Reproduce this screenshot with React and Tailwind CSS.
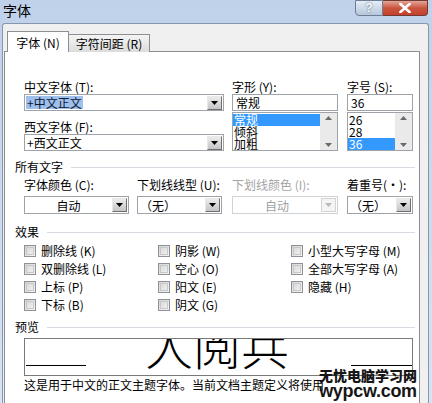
import React from "react";

const F = { fontFamily: '"Noto Sans CJK SC", "Noto Sans", sans-serif' };

function DropBtn({ disabled }) {
  return (
    <div
      className={
        "w-[15px] h-[14px] flex items-center justify-center border " +
        (disabled
          ? "border-[#d4d4d4] bg-[#f4f4f4]"
          : "border-t-[#e8e8e8] border-l-[#e8e8e8] border-r-[#6f6f6f] border-b-[#6f6f6f] bg-gradient-to-b from-[#ececec] to-[#c4c4c4]")
      }
    >
      <svg width="7" height="4" viewBox="0 0 7 4">
        <path d="M0 0h7L3.5 4z" fill={disabled ? "#b8b8b8" : "#000"} />
      </svg>
    </div>
  );
}

function Combo({ w, text, center, disabled, sel, h = "h-[18px]" }) {
  return (
    <div
      className={
        w +
        " " +
        h +
        " border flex items-center bg-white pr-[1px] " +
        (disabled ? "border-[#cfd2d6]" : "border-[#9ea3aa]")
      }
    >
      <div className={"flex-1 flex " + (center ? "justify-center" : "pl-[1px]")}>
        <span
          className={
            "text-[12px] leading-[13px] px-[1px] " +
            (sel ? "bg-[#9fc0ec] text-[#0d1a33]" : disabled ? "text-[#a0a0a0]" : "text-black")
          }
        >
          {text}
        </span>
      </div>
      <DropBtn disabled={disabled} />
    </div>
  );
}

function ScrollBar() {
  return (
    <div className="w-[17px] self-stretch bg-[#eaeaea] flex flex-col justify-between items-center py-[3px]">
      <svg width="7" height="4" viewBox="0 0 7 4">
        <path d="M3.5 0L7 4H0z" fill="#6a6a6a" />
      </svg>
      <svg width="7" height="4" viewBox="0 0 7 4">
        <path d="M0 0h7L3.5 4z" fill="#6a6a6a" />
      </svg>
    </div>
  );
}

function ListBox({ w, value, items, selIndex }) {
  return (
    <div className={w + " flex flex-col"}>
      <div className="h-[17px] border border-[#9ea3aa] bg-white flex items-center pl-[3px] text-[12px] leading-[13px]">
        {value}
      </div>
      <div className="h-[39px] mt-[1px] border border-[#9ea3aa] bg-white flex">
        <div className="flex-1 flex flex-col pt-[1px]">
          {items.map((it, i) => (
            <div
              key={it}
              className={
                "h-[12px] leading-[12px] text-[12px] pl-[1px] " +
                (i === selIndex ? "bg-[#3399ff] text-white" : "text-black")
              }
            >
              {it}
            </div>
          ))}
        </div>
        <ScrollBar />
      </div>
    </div>
  );
}

function Label({ children, gray, className = "" }) {
  return (
    <div
      className={
        "h-[15px] text-[12px] leading-[15px] whitespace-nowrap " +
        (gray ? "text-[#a3a3a3] " : "text-black ") +
        className
      }
    >
      {children}
    </div>
  );
}

function Section({ title }) {
  return (
    <div className="flex items-center pl-[10px] pr-[4px] h-[16px]">
      <span className="text-[12px] leading-[16px]">{title}</span>
      <div className="flex-1 h-px bg-[#d5dbe1] ml-[8px]" />
    </div>
  );
}

function Check({ label }) {
  return (
    <div className="flex items-center h-[18px]">
      <div className="w-[12px] h-[12px] border border-[#8e9296] bg-gradient-to-br from-[#d4d4d4] to-[#f6f6f6] p-[1px]">
        <div className="w-full h-full border border-[#c8c8c8]" />
      </div>
      <span className="ml-[5px] text-[12px] leading-[16px] whitespace-nowrap">{label}</span>
    </div>
  );
}

export default function App() {
  return (
    <div
      style={F}
      className="w-[432px] h-[403px] overflow-hidden bg-gradient-to-b from-[#bfd2ea] to-[#d6e4f4] flex flex-col text-black relative"
    >
      {/* title bar */}
      <div className="h-[23px] flex justify-between shrink-0">
        <div className="pl-[3px] pt-[1px] text-[14px] leading-[18px]">字体</div>
        <div className="flex h-[16px] mr-[4px]">
          <div
            className="w-[28px] h-full border border-[#6e7d92] rounded-bl-[4px] bg-gradient-to-b from-[#e6edf6] to-[#b6c7dc] flex items-center justify-center text-[12px] leading-none font-bold text-[#f7f9fc]"
            style={{ fontFamily: '"Liberation Sans", sans-serif', textShadow: "0 0 2px #4a5b70" }}
          >
            ?
          </div>
          <div className="w-[45px] h-full border border-l-0 border-[#6e3a32] rounded-br-[4px] bg-gradient-to-b from-[#e2a597] via-[#c9553f] to-[#c53f2b] flex items-center justify-center">
            <svg width="12" height="10" viewBox="0 0 12 10">
              <path d="M1.5 1l9 8M10.5 1l-9 8" stroke="#fff" strokeWidth="2.6" strokeLinecap="square" />
            </svg>
          </div>
        </div>
      </div>

      {/* body */}
      <div className="flex-1 flex">
        <div className="w-[2px]" />
        <div className="w-[427px] bg-[#f0f0f0] border-l border-t border-r border-[#8796ab] rounded-t-[3px] flex flex-col pt-[7px]">
          {/* tabs */}
          <div className="flex items-end h-[21px] pl-[4px] relative z-10">
            <div className="w-[62px] h-[21px] bg-white border border-b-0 border-[#8c8e94] flex items-center justify-center text-[12px] leading-none pt-[1px]">
              字体 (N)
            </div>
            <div className="w-[81px] h-[18px] bg-gradient-to-b from-[#f4f4f4] to-[#dcdcdc] border border-l-0 border-b-0 border-[#8c8e94] flex items-center justify-center text-[12px] leading-none">
              字符间距 (R)
            </div>
          </div>
          {/* panel */}
          <div className="ml-[1px] -mt-[1px] w-[416px] flex-1 bg-white border border-[#8c8e94] border-b-0 flex flex-col pt-[27px] relative">
            {/* row 1 */}
            <div className="flex pl-[19px]">
              <div className="w-[200px] flex flex-col">
                <Label>中文字体 (T):</Label>
                <Combo w="w-[200px]" h="h-[17px]" text="+中文正文" sel />
                <Label className="mt-[8px]">西文字体 (F):</Label>
                <Combo w="w-[200px]" h="h-[17px]" text="+西文正文" />
              </div>
              <div className="ml-[8px] flex flex-col">
                <Label>字形 (Y):</Label>
                <ListBox w="w-[106px]" value="常规" items={["常规", "倾斜", "加粗"]} selIndex={0} />
              </div>
              <div className="ml-[9px] flex flex-col">
                <Label>字号 (S):</Label>
                <ListBox w="w-[66px]" value="36" items={["26", "28", "36"]} selIndex={2} />
              </div>
            </div>

            {/* 所有文字 */}
            <div className="mt-[8px]">
              <Section title="所有文字" />
            </div>
            <div className="flex pl-[19px] mt-[2px]">
              <div className="flex flex-col w-[105px]">
                <Label>字体颜色 (C):</Label>
                <Combo w="w-[105px] mt-[4px]" text="自动" center />
              </div>
              <div className="flex flex-col ml-[8px] w-[85px]">
                <Label>下划线线型 (U):</Label>
                <Combo w="w-[85px] mt-[4px]" text="（无）" />
              </div>
              <div className="flex flex-col ml-[10px] w-[106px]">
                <Label gray>下划线颜色 (I):</Label>
                <Combo w="w-[106px] mt-[4px]" text="自动" center disabled />
              </div>
              <div className="flex flex-col ml-[9px] w-[66px]">
                <Label>着重号(・):</Label>
                <Combo w="w-[66px] mt-[4px]" text="（无）" />
              </div>
            </div>

            {/* 效果 */}
            <div className="mt-[10px]">
              <Section title="效果" />
            </div>
            <div className="flex pl-[19px] mt-[2px]">
              <div className="flex flex-col w-[134px]">
                <Check label="删除线 (K)" />
                <Check label="双删除线 (L)" />
                <Check label="上标 (P)" />
                <Check label="下标 (B)" />
              </div>
              <div className="flex flex-col w-[133px]">
                <Check label="阴影 (W)" />
                <Check label="空心 (O)" />
                <Check label="阳文 (E)" />
                <Check label="阴文 (G)" />
              </div>
              <div className="flex flex-col">
                <Check label="小型大写字母 (M)" />
                <Check label="全部大写字母 (A)" />
                <Check label="隐藏 (H)" />
              </div>
            </div>

            {/* 预览 */}
            <div className="mt-[5px]">
              <Section title="预览" />
            </div>
            <div className="ml-[19px] mt-[3px] w-[389px] h-[38px] border border-[#7a7a7a] bg-white relative overflow-hidden">
              <div className="absolute left-[1px] top-[26px] w-[60px] h-[1px] bg-black" />
              <div className="absolute left-[326px] top-[26px] w-[61px] h-[1px] bg-black" />
              <div className="absolute left-[120px] top-[-19px] text-[48px] leading-[48px] whitespace-nowrap font-light text-black">
                人阅兵
              </div>
            </div>
            <div className="ml-[19px] mt-[1px] text-[12px] leading-[16px] whitespace-nowrap">
              这是用于中文的正文主题字体。当前文档主题定义将使用
            </div>

            {/* watermark */}
            <div className="absolute left-[314px] top-[315px] flex flex-col items-center text-[#161616]">
              <div className="text-[14px] leading-[17px] font-black whitespace-nowrap">无忧电脑学习网</div>
              <div
                className="text-[18px] leading-[15px] font-bold whitespace-nowrap tracking-[-0.3px]"
                style={{ fontFamily: '"Liberation Sans", sans-serif' }}
              >
                wypcw.com
              </div>
            </div>
          </div>
        </div>
        <div className="flex-1" />
      </div>
    </div>
  );
}
